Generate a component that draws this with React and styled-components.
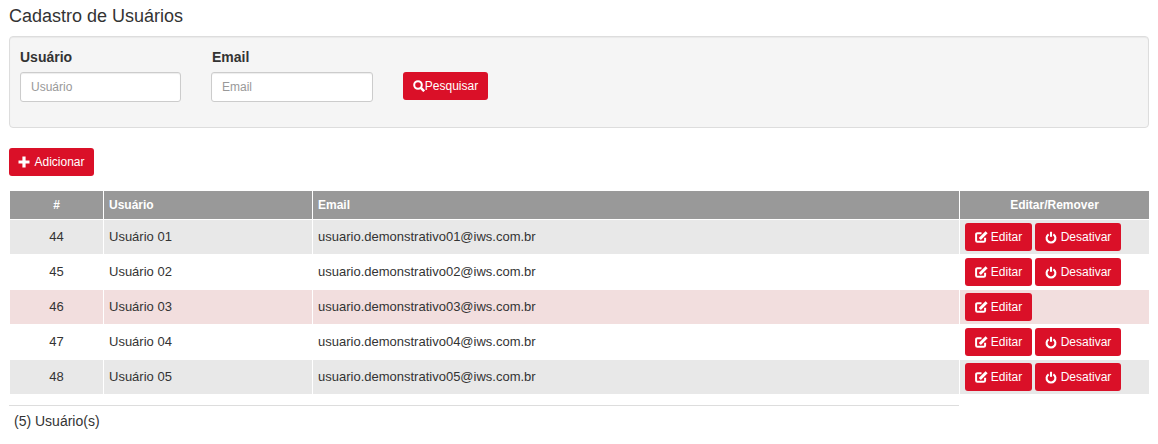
import React from "react";
import styled, { createGlobalStyle } from "styled-components";

const GlobalStyle = createGlobalStyle`
  * {
    box-sizing: border-box;
  }
  body {
    margin: 0;
    background: #fff;
    color: #333;
    font-family: "Liberation Sans", Arial, sans-serif;
    font-size: 13px;
  }
`;

const Page = styled.div`
  width: 1158px;
  height: 444px;
  padding: 6px 9px 0;
  overflow: hidden;
`;

const Title = styled.h1`
  margin: 0 0 10px;
  height: 20px;
  font-size: 18px;
  line-height: 20px;
  font-weight: 400;
  color: #333;
`;

const SearchPanel = styled.form`
  display: flex;
  align-items: flex-start;
  width: 1140px;
  height: 92px;
  padding: 12px 10px;
  background: #f5f5f5;
  border: 1px solid #ddd;
  border-radius: 4px;
  box-shadow: inset 0 1px 1px rgba(0, 0, 0, 0.05);
`;

const Field = styled.div`
  display: flex;
  flex-direction: column;
  width: ${(p) => p.$width}px;
`;

const Label = styled.label`
  height: 23px;
  padding-left: ${(p) => p.$indent || 0}px;
  font-size: 14px;
  line-height: 17px;
  font-weight: 700;
  color: #333;
`;

const Input = styled.input`
  width: ${(p) => p.$width}px;
  height: 30px;
  padding: 0 10px;
  border: 1px solid #ccc;
  border-radius: 3px;
  background: #fff;
  font-family: inherit;
  font-size: 12px;
  box-shadow: inset 0 1px 1px rgba(0, 0, 0, 0.075);

  &::placeholder {
    color: #999;
    opacity: 1;
  }
`;

const Button = styled.button`
  display: inline-flex;
  align-items: center;
  justify-content: center;
  gap: ${(p) => p.$gap ?? 4}px;
  width: ${(p) => p.$width}px;
  height: 28px;
  padding: 0;
  border: 0;
  border-radius: 3px;
  background: #da1028;
  color: #fff;
  font-family: inherit;
  font-size: 12px;
  line-height: 1;
  cursor: pointer;

  svg {
    flex: none;
  }
`;

const SearchAction = styled.div`
  padding-top: 23px;
`;

const Toolbar = styled.div`
  height: 28px;
  margin: 20px 0 14px;
`;

const Table = styled.table`
  width: 1140px;
  table-layout: fixed;
  border-collapse: collapse;
  font-size: 13px;
`;

const HeadCell = styled.th`
  height: 29px;
  padding: 0 5px;
  border: 1px solid #fff;
  background: #999;
  color: #fff;
  font-weight: 700;
  font-size: 12px;
  text-align: ${(p) => (p.$center ? "center" : "left")};
`;

const Row = styled.tr`
  background: ${(p) => {
    if (p.$inactive) return "#f2dede";
    return p.$odd ? "#e8e8e8" : "#fff";
  }};
`;

const Cell = styled.td`
  height: 35px;
  padding: 0 5px 2px;
  border: 1px solid #fff;
  color: #333;
  font-size: 13px;
  text-align: ${(p) => (p.$center ? "center" : "left")};
`;

const ActionCell = styled(Cell)`
  padding: 0 5px;
`;

const Actions = styled.div`
  display: flex;
  gap: 3px;
`;

const Divider = styled.hr`
  width: 950px;
  height: 1px;
  margin: 10px 0 0;
  border: 0;
  background: #ddd;
`;

const Total = styled.p`
  margin: 7px 0 0 5px;
  font-size: 14px;
  line-height: 16px;
  color: #333;
`;

const SearchIcon = () => (
  <svg width="12" height="12" viewBox="0 0 12 12" fill="none" stroke="#fff">
    <circle cx="5" cy="5" r="3.8" strokeWidth="2" />
    <path d="M7.9 7.9l3.3 3.3" strokeWidth="2.6" />
  </svg>
);

const PlusIcon = () => (
  <svg width="12" height="12" viewBox="0 0 12 12" fill="none" stroke="#fff">
    <path d="M6 .5v11M.5 6h11" strokeWidth="3.2" />
  </svg>
);

const EditIcon = () => (
  <svg width="13" height="12" viewBox="0 0 13 12" fill="none" stroke="#fff">
    <path d="M6.5 2.2H2.4a1.3 1.3 0 0 0-1.3 1.3v6a1.3 1.3 0 0 0 1.3 1.3h6.4a1.3 1.3 0 0 0 1.3-1.3V6.8" strokeWidth="2" />
    <path d="M4.8 8l6.8-6.8" strokeWidth="3" />
  </svg>
);

const PowerIcon = () => (
  <svg width="12" height="13" viewBox="0 0 12 13" fill="none" stroke="#fff">
    <path d="M3.6 3.4a4.4 4.4 0 1 0 4.8 0" strokeWidth="2.1" />
    <path d="M6 .8v5" strokeWidth="2.1" />
  </svg>
);

const users = [
  { id: 44, name: "Usuário 01", email: "usuario.demonstrativo01@iws.com.br", active: true },
  { id: 45, name: "Usuário 02", email: "usuario.demonstrativo02@iws.com.br", active: true },
  { id: 46, name: "Usuário 03", email: "usuario.demonstrativo03@iws.com.br", active: false },
  { id: 47, name: "Usuário 04", email: "usuario.demonstrativo04@iws.com.br", active: true },
  { id: 48, name: "Usuário 05", email: "usuario.demonstrativo05@iws.com.br", active: true },
];

const App = () => {
  return (
    <Page>
      <GlobalStyle />
      <Title>Cadastro de Usuários</Title>

      <SearchPanel>
        <Field $width={191}>
          <Label htmlFor="usuario">Usuário</Label>
          <Input id="usuario" $width={161} placeholder="Usuário" />
        </Field>
        <Field $width={192}>
          <Label htmlFor="email" $indent={1}>Email</Label>
          <Input id="email" $width={162} placeholder="Email" />
        </Field>
        <SearchAction>
          <Button type="button" $width={85} $gap={0}>
            <SearchIcon />
            Pesquisar
          </Button>
        </SearchAction>
      </SearchPanel>

      <Toolbar>
        <Button type="button" $width={85} $gap={4}>
          <PlusIcon />
          Adicionar
        </Button>
      </Toolbar>

      <Table>
        <colgroup>
          <col width="94" />
          <col width="209" />
          <col width="647" />
          <col width="190" />
        </colgroup>
        <thead>
          <tr>
            <HeadCell $center>#</HeadCell>
            <HeadCell>Usuário</HeadCell>
            <HeadCell>Email</HeadCell>
            <HeadCell $center>Editar/Remover</HeadCell>
          </tr>
        </thead>
        <tbody>
          {users.map((user, i) => (
            <Row key={user.id} $odd={i % 2 === 0} $inactive={!user.active}>
              <Cell $center>{user.id}</Cell>
              <Cell>{user.name}</Cell>
              <Cell>{user.email}</Cell>
              <ActionCell>
                <Actions>
                  <Button type="button" $width={67} $gap={3}>
                    <EditIcon />
                    Editar
                  </Button>
                  {user.active && (
                    <Button type="button" $width={86}>
                      <PowerIcon />
                      Desativar
                    </Button>
                  )}
                </Actions>
              </ActionCell>
            </Row>
          ))}
        </tbody>
      </Table>

      <Divider />
      <Total>(5) Usuário(s)</Total>
    </Page>
  );
};

export default App;
